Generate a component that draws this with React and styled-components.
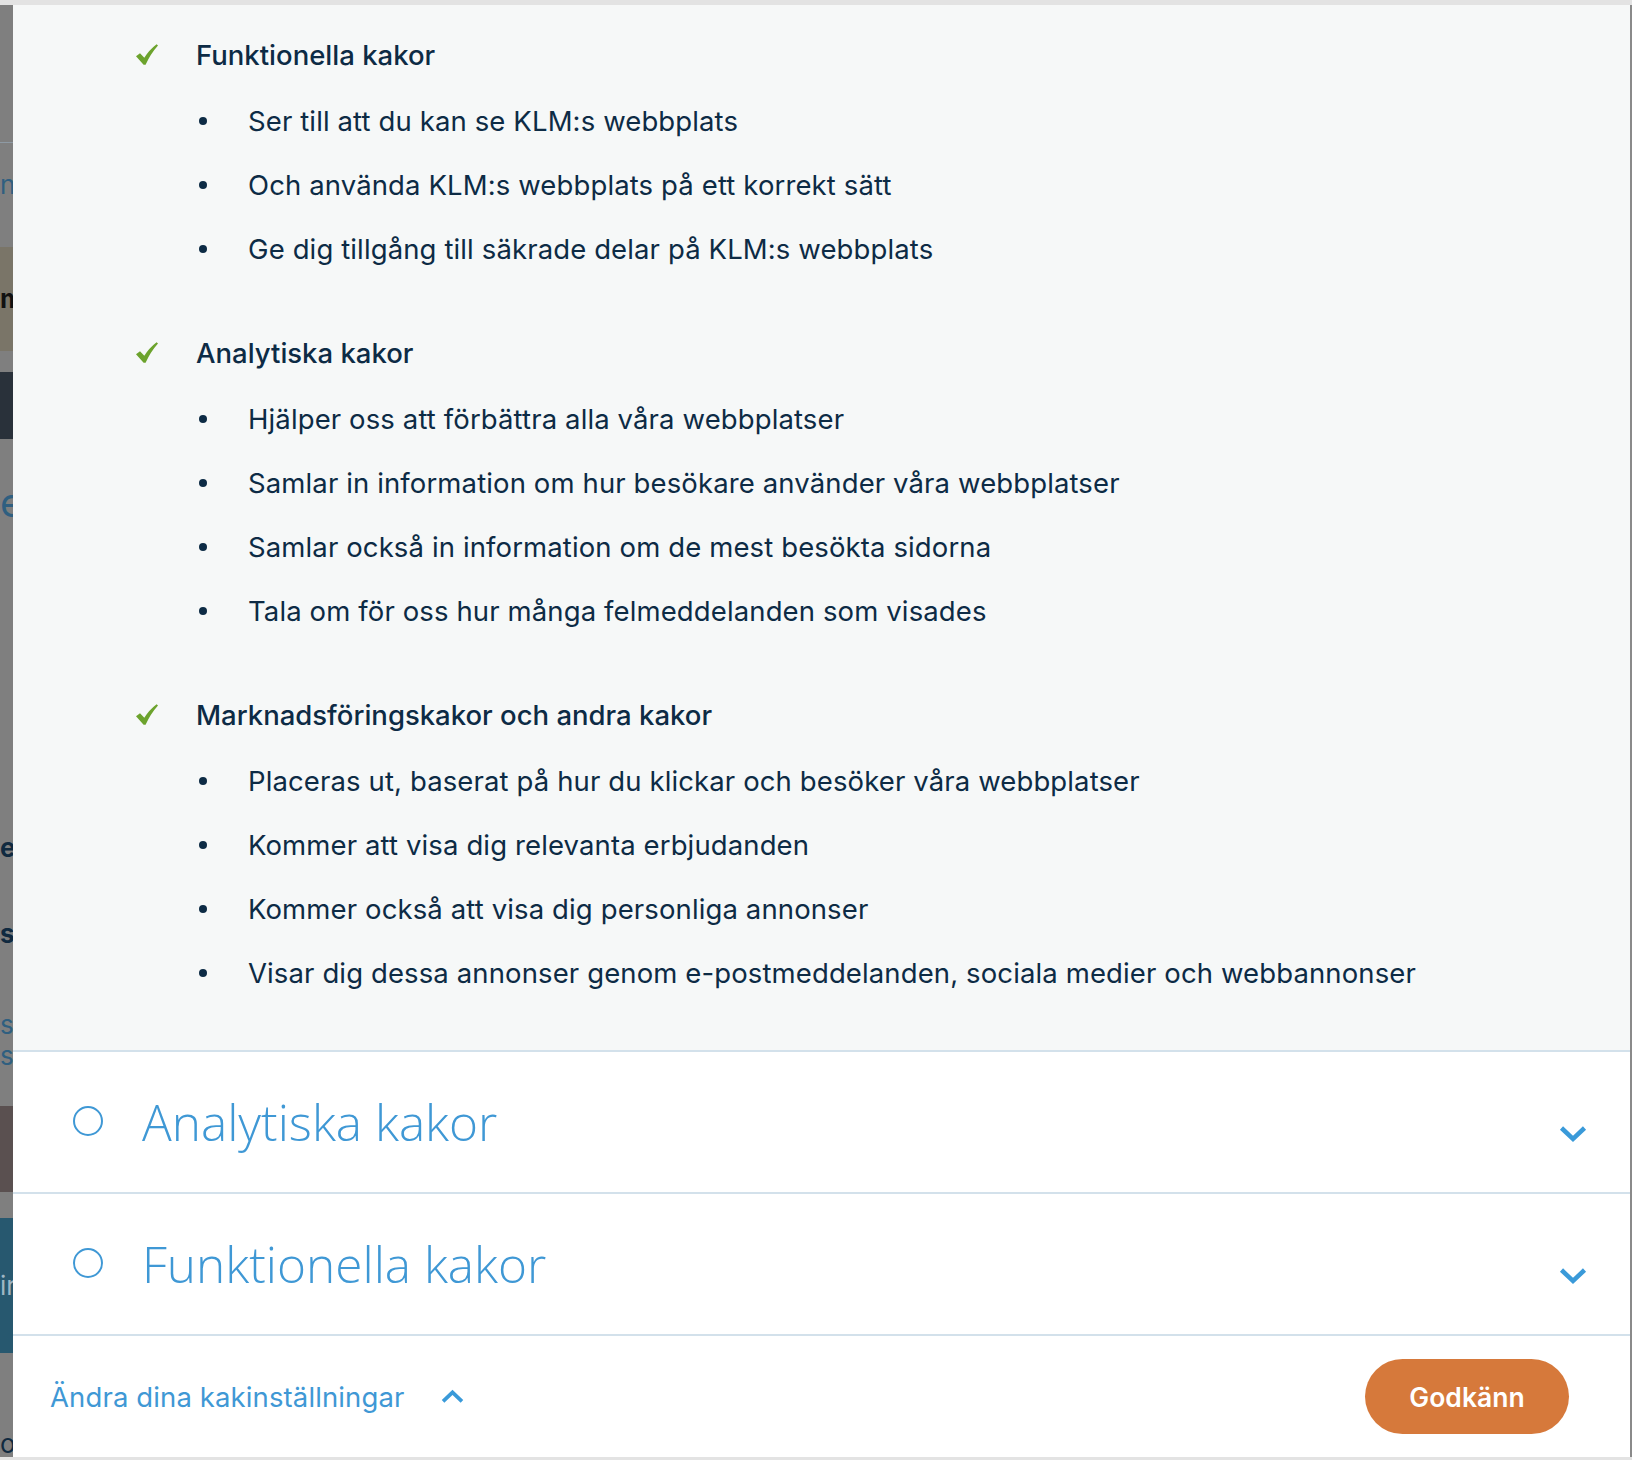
import React from "react";
import styled, { createGlobalStyle } from "styled-components";

const GlobalStyle = createGlobalStyle`
  html, body { margin: 0; padding: 0; }
  body { background: #e6e6e6; font-family: "Inter", "Liberation Sans", sans-serif; }
  * { box-sizing: border-box; }
`;

const Page = styled.div`
  width: 1632px;
  height: 1460px;
  display: flex;
  flex-direction: column;
  overflow: hidden;
`;

const TopBar = styled.div`
  height: 5px;
  background: #e3e3e3;
  flex: none;
`;

const BottomBar = styled.div`
  height: 3px;
  background: #e3e3e3;
  flex: none;
`;

const Main = styled.div`
  flex: 1;
  display: flex;
  min-height: 0;
`;

const Backdrop = styled.div`
  width: 13px;
  flex: none;
  display: flex;
  flex-direction: column;
  background: #7f7f7f;
  overflow: hidden;
`;

const BackBlock = styled.div`
  height: ${(p) => p.$h}px;
  flex: none;
  background: ${(p) => p.$bg || "#7f7f7f"};
  border-bottom: ${(p) => (p.$line ? "1px solid #8e9aa4" : "none")};
  display: flex;
  align-items: ${(p) => p.$align || "center"};
  justify-content: flex-start;
  overflow: hidden;
  white-space: nowrap;
  font-family: "Inter", sans-serif;
  font-size: ${(p) => p.$fs || 26}px;
  font-weight: ${(p) => p.$fw || 400};
  line-height: 1;
  color: ${(p) => p.$color || "#123"};
`;

const Edge = styled.div`
  width: 2px;
  flex: none;
  background: #8a8a8a;
`;

const Dialog = styled.div`
  flex: 1;
  display: flex;
  flex-direction: column;
  background: #ffffff;
  min-width: 0;
`;

const Details = styled.section`
  background: #f6f8f8;
  padding: 18px 0 45px 123px;
  display: flex;
  flex-direction: column;
  gap: 40px;
  color: #0d2b45;
`;

const Group = styled.div`
  display: flex;
  flex-direction: column;
  gap: 2px;
`;

const GroupHeading = styled.h3`
  margin: 0;
  height: 64px;
  display: flex;
  align-items: center;
  gap: 38px;
  font-size: 27.5px;
  font-weight: 500;
`;

const CheckIcon = styled.svg`
  width: 22px;
  height: 21px;
  flex: none;
  margin-top: -2px;
`;

const BulletList = styled.ul`
  margin: 0;
  padding: 0 0 0 63px;
  list-style: none;
`;

const BulletItem = styled.li`
  height: 64px;
  display: flex;
  align-items: center;
  gap: 41px;
  font-size: 27.5px;
  font-weight: 400;
  letter-spacing: 0.12px;
`;

const Dot = styled.span`
  width: 8px;
  height: 8px;
  border-radius: 50%;
  background: #0d2b45;
  flex: none;
`;

const CategoryRow = styled.div`
  height: 142px;
  border-top: 2px solid #d3e1eb;
  display: flex;
  align-items: center;
  padding: 0 43px 0 60px;
`;

const Radio = styled.span`
  width: 30px;
  height: 30px;
  border: 2px solid #3f98d5;
  border-radius: 50%;
  flex: none;
  margin-top: -2px;
`;

const CategoryTitle = styled.h2`
  margin: 0 0 0 39px;
  flex: 1;
  font-family: "Open Sans", "Lato", sans-serif;
  font-size: 49.5px;
  font-weight: 300;
  color: #3f98d5;
`;

const Chevron = styled.svg`
  width: ${(p) => p.$w || 28}px;
  height: ${(p) => p.$h || 18}px;
  flex: none;
  margin-top: ${(p) => p.$mt || 0}px;
`;

const Footer = styled.div`
  flex: 1;
  border-top: 2px solid #d3e1eb;
  display: flex;
  align-items: center;
  padding: 0 61px 0 37px;
`;

const ToggleLink = styled.button`
  border: 0;
  background: none;
  padding: 0;
  display: flex;
  align-items: center;
  gap: 36px;
  font-family: "Inter", sans-serif;
  font-size: 27.5px;
  font-weight: 400;
  letter-spacing: 0.12px;
  color: #3f98d5;
  cursor: pointer;
`;

const Spacer = styled.div`
  flex: 1;
`;

const AcceptButton = styled.button`
  width: 204px;
  height: 75px;
  border: 0;
  border-radius: 38px;
  background: #d6793b;
  color: #ffffff;
  font-family: "Inter", sans-serif;
  font-size: 26.5px;
  font-weight: 600;
  cursor: pointer;
`;

const groups = [
  {
    title: "Funktionella kakor",
    items: [
      "Ser till att du kan se KLM:s webbplats",
      "Och använda KLM:s webbplats på ett korrekt sätt",
      "Ge dig tillgång till säkrade delar på KLM:s webbplats",
    ],
  },
  {
    title: "Analytiska kakor",
    items: [
      "Hjälper oss att förbättra alla våra webbplatser",
      "Samlar in information om hur besökare använder våra webbplatser",
      "Samlar också in information om de mest besökta sidorna",
      "Tala om för oss hur många felmeddelanden som visades",
    ],
  },
  {
    title: "Marknadsföringskakor och andra kakor",
    items: [
      "Placeras ut, baserat på hur du klickar och besöker våra webbplatser",
      "Kommer att visa dig relevanta erbjudanden",
      "Kommer också att visa dig personliga annonser",
      "Visar dig dessa annonser genom e-postmeddelanden, sociala medier och webbannonser",
    ],
  },
];

const Check = () => (
  <CheckIcon viewBox="0 0 22 21">
    <path
      d="M0 12.2 L4 9.2 L8.3 13.8 Q13 6 20.6 0.2 L22 1.6 Q14.5 10 9.6 20.8 L7.6 20.8 Z"
      fill="#6ca32d"
    />
  </CheckIcon>
);

const ChevronDown = () => (
  <Chevron viewBox="0 0 28 18" $mt={24}>
    <polyline points="2.5,3 14,14 25.5,3" fill="none" stroke="#3a9ad9" strokeWidth="4.5" />
  </Chevron>
);

const ChevronUp = () => (
  <Chevron viewBox="0 0 28 18" $w={23} $h={15}>
    <polyline points="2.5,15 14,4 25.5,15" fill="none" stroke="#3a9ad9" strokeWidth="4.5" />
  </Chevron>
);

export default function App() {
  return (
    <>
      <GlobalStyle />
      <Page>
        <TopBar />
        <Main>
          <Backdrop>
            <BackBlock $h={138} $line />
            <BackBlock $h={84} $color="#2f5f80">ne</BackBlock>
            <BackBlock $h={20} />
            <BackBlock $h={104} $bg="#7a7568" $color="#111" $fw={700}>m</BackBlock>
            <BackBlock $h={21} />
            <BackBlock $h={67} $bg="#29313a" />
            <BackBlock $h={128} $color="#2f5f80" $fs={40}>e</BackBlock>
            <BackBlock $h={257} />
            <BackBlock $h={48} $color="#102a40" $fw={700}>er</BackBlock>
            <BackBlock $h={38} />
            <BackBlock $h={48} $color="#102a40" $fw={700}>s</BackBlock>
            <BackBlock $h={51} />
            <BackBlock $h={32} $color="#2f5f80">sa</BackBlock>
            <BackBlock $h={30} $color="#2f5f80">st</BackBlock>
            <BackBlock $h={35} />
            <BackBlock $h={86} $bg="#5a5050" />
            <BackBlock $h={26} />
            <BackBlock $h={135} $bg="#27586f" $color="#9fb6c4">ir</BackBlock>
            <BackBlock $h={104} $align="flex-end" $color="#102a40">ol</BackBlock>
          </Backdrop>
          <Dialog>
            <Details>
              {groups.map((g) => (
                <Group key={g.title}>
                  <GroupHeading>
                    <Check />
                    {g.title}
                  </GroupHeading>
                  <BulletList>
                    {g.items.map((it) => (
                      <BulletItem key={it}>
                        <Dot />
                        {it}
                      </BulletItem>
                    ))}
                  </BulletList>
                </Group>
              ))}
            </Details>
            <CategoryRow>
              <Radio />
              <CategoryTitle>Analytiska kakor</CategoryTitle>
              <ChevronDown />
            </CategoryRow>
            <CategoryRow>
              <Radio />
              <CategoryTitle>Funktionella kakor</CategoryTitle>
              <ChevronDown />
            </CategoryRow>
            <Footer>
              <ToggleLink>
                Ändra dina kakinställningar
                <ChevronUp />
              </ToggleLink>
              <Spacer />
              <AcceptButton>Godkänn</AcceptButton>
            </Footer>
          </Dialog>
          <Edge />
        </Main>
        <BottomBar />
      </Page>
    </>
  );
}
